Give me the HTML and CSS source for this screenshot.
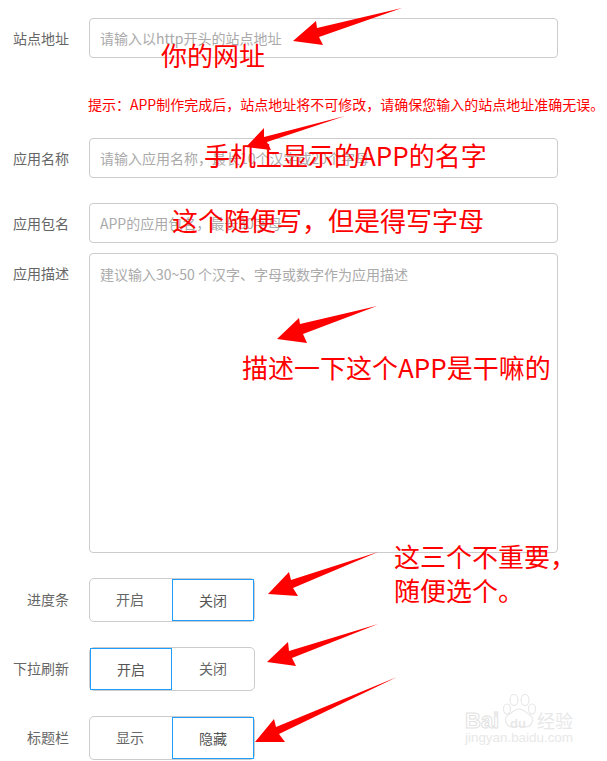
FILE: index.html
```html
<!DOCTYPE html>
<html lang="zh-CN">
<head>
    <meta charset="UTF-8">
    <title>应用设置</title>
    <link rel="stylesheet" href="styles.css">
</head>
<body>
    <form class="app-form">
        <div class="row row-site">
            <label class="row-label">站点地址</label>
            <input class="text-input" type="text" placeholder="请输入以http开头的站点地址">
        </div>
        <p class="hint">提示：APP制作完成后，站点地址将不可修改，请确保您输入的站点地址准确无误。</p>
        <div class="row row-name">
            <label class="row-label">应用名称</label>
            <input class="text-input" type="text" placeholder="请输入应用名称，最长10个汉字或20个字母">
        </div>
        <div class="row row-package">
            <label class="row-label">应用包名</label>
            <input class="text-input" type="text" placeholder="APP的应用包名，最长30字母">
        </div>
        <div class="row row-desc">
            <label class="row-label label-top">应用描述</label>
            <textarea class="text-area" placeholder="建议输入30~50 个汉字、字母或数字作为应用描述"></textarea>
        </div>
        <div class="row row-toggle">
            <label class="row-label">进度条</label>
            <div class="toggle">
                <button type="button" class="toggle-item">开启</button>
                <button type="button" class="toggle-item active">关闭</button>
            </div>
        </div>
        <div class="row row-toggle">
            <label class="row-label">下拉刷新</label>
            <div class="toggle">
                <button type="button" class="toggle-item active">开启</button>
                <button type="button" class="toggle-item">关闭</button>
            </div>
        </div>
        <div class="row row-toggle">
            <label class="row-label">标题栏</label>
            <div class="toggle">
                <button type="button" class="toggle-item">显示</button>
                <button type="button" class="toggle-item active">隐藏</button>
            </div>
        </div>
    </form>

    <!-- red notes drawn over the screenshot -->
    <svg class="arrows" width="607" height="761" viewBox="0 0 607 761">
        <polygon points="402,8 317,28 316,21 293,41 323,45 319,37"/>
        <polygon points="345,116 264,137 264,128 246,147 271,150 267,142"/>
        <polygon points="377,306 300,324 299,318 277,339 307,343 303,334"/>
        <polygon points="378,552 291,580 289,572 268,594 298,596 293,588"/>
        <polygon points="378,624 289,651 288,642 267,662 296,666 292,658"/>
        <polygon points="397,677 276,727 274,719 255,742 285,742 279,734"/>
    </svg>
    <span class="note note-url">你的网址</span>
    <span class="note note-name">手机上显示的APP的名字</span>
    <span class="note note-package">这个随便写，但是得写字母</span>
    <span class="note note-desc">描述一下这个APP是干嘛的</span>
    <span class="note note-toggle">这三个不重要，<br>随便选个。</span>

    <div class="watermark">
        <svg class="paw" width="34" height="35" viewBox="0 0 34 35">
            <ellipse cx="5" cy="15" rx="3.5" ry="5"/>
            <ellipse cx="12" cy="6" rx="4" ry="5.5"/>
            <ellipse cx="23" cy="6" rx="4" ry="5.5"/>
            <ellipse cx="30" cy="15" rx="3.5" ry="5"/>
            <path d="M17 15c4 0 6 3 11 6 5 4 2 12-5 12-2 0-4-1-6-1s-4 1-6 1c-7 0-10-8-5-12 5-3 7-6 11-6z"/>
        </svg>
        <div class="mark-top"><span class="mark-bai">Bai</span><span class="mark-du">du</span><span class="mark-cn">经验</span></div>
        <div class="mark-url">jingyan.baidu.com</div>
    </div>
</body>
</html>
```

FILE: styles.css
```css
* {
    box-sizing: border-box;
}

body {
    margin: 0;
    width: 607px;
    height: 761px;
    position: relative;
    overflow: hidden;
    background-color: white;
    font-family: "Noto Sans CJK SC", "Liberation Sans", sans-serif;
    font-size: 14px;
    color: #666;
}

.app-form {
    padding-top: 18px;
}

.row {
    display: flex;
    align-items: center;
}

.row-label {
    width: 69px;
    margin-right: 20px;
    text-align: right;
    color: #666;
    flex-shrink: 0;
    line-height: 40px;
}

.label-top {
    align-self: flex-start;
}

.text-input,
.text-area {
    width: 469px;
    border: 1px solid #ccc;
    border-radius: 4px;
    padding: 0 10px;
    font-family: inherit;
    font-size: 14px;
    color: #666;
    outline: none;
    background: white;
}

.text-input {
    height: 40px;
}

.text-area {
    display: block;
    height: 300px;
    padding-top: 10px;
    resize: none;
}

.text-input::placeholder,
.text-area::placeholder {
    color: #aaa;
    opacity: 1;
}

.hint {
    margin: 36px 0 0 88px;
    width: 519px;
    white-space: nowrap;
    color: #f00;
    line-height: 20px;
    font-size: 14px;
}

.row-name {
    margin-top: 24px;
}

.row-package {
    margin-top: 25px;
}

.row-desc {
    margin-top: 10px;
    align-items: flex-start;
}

.row-toggle {
    margin-top: 25px;
}

.row-toggle .row-label {
    padding-bottom: 3px;
}

.toggle {
    display: flex;
    width: 166px;
    height: 44px;
    border: 1px solid #ccc;
    border-radius: 5px;
}

.toggle-item {
    width: 50%;
    border: none;
    background: none;
    padding: 0 0 2px;
    font-family: inherit;
    font-size: 14px;
    color: #666;
}

.toggle-item:first-child {
    padding-right: 2px;
}

.toggle-item.active {
    border: 1px solid #1e9fff;
    padding: 0 0 1px;
    color: #555;
}

.arrows {
    position: absolute;
    left: 0;
    top: 0;
    fill: #f00;
}

.note {
    position: absolute;
    color: #f00;
    font-size: 26px;
    line-height: 34px;
    white-space: nowrap;
}

.note-url {
    left: 161px;
    top: 38px;
}

.note-name {
    left: 204px;
    top: 138px;
}

.note-package {
    left: 172px;
    top: 203px;
}

.note-desc {
    left: 242px;
    top: 350px;
}

.note-toggle {
    left: 394px;
    top: 539px;
}

.watermark {
    position: absolute;
    left: 465px;
    top: 695px;
    width: 110px;
    height: 52px;
    color: #e8e8e8;
    font-family: "Liberation Sans", sans-serif;
}

.paw {
    position: absolute;
    left: 37px;
    top: -1px;
    fill: white;
    stroke: #e8e8e8;
    stroke-width: 1.2;
}

.mark-top {
    position: relative;
    display: flex;
    align-items: baseline;
    padding-top: 15px;
    height: 34px;
    line-height: 20px;
    white-space: nowrap;
}

.mark-bai {
    width: 45px;
    font-size: 22px;
    font-weight: bold;
    color: white;
    -webkit-text-stroke: 1px #e2e2e2;
}

.mark-du {
    width: 27px;
    font-size: 13px;
    font-weight: bold;
}

.mark-cn {
    font-family: "Noto Sans CJK SC", sans-serif;
    font-size: 18px;
}

.mark-url {
    margin-top: 2px;
    font-size: 13.4px;
    line-height: 14px;
    white-space: nowrap;
}
```
